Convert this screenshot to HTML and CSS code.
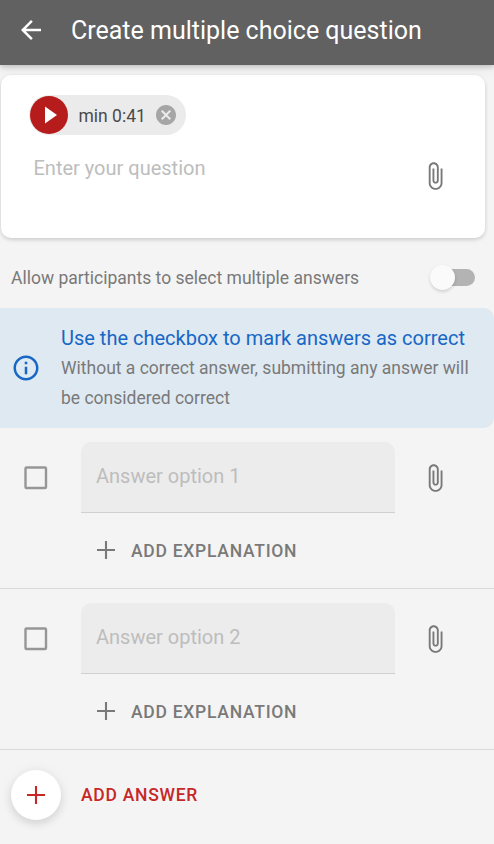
FILE: index.html
```html
<!DOCTYPE html>
<html lang="en">
<head>
<meta charset="utf-8">
<title>Create multiple choice question</title>
<link rel="stylesheet" href="styles.css">
</head>
<body>
<svg class="defs" aria-hidden="true">
  <symbol id="clip" viewBox="0 0 24 24"><path d="M16.5 6v11.5c0 2.21-1.79 4-4 4s-4-1.79-4-4V5c0-1.38 1.12-2.5 2.5-2.5s2.5 1.12 2.5 2.5v10.5c0 .55-.45 1-1 1s-1-.45-1-1V6H10v9.5c0 1.38 1.12 2.5 2.5 2.5s2.5-1.12 2.5-2.5V5c0-2.210-1.790-4-4-4S7 2.790 7 5v12.500c0 3.040 2.460 5.500 5.500 5.500s5.500-2.460 5.500-5.500V6h-1.500z"/></symbol>
  <symbol id="plus" viewBox="0 0 30 30"><path d="M6 15h18M15 6v18" fill="none" stroke="currentColor" stroke-width="2.100"/></symbol>
  <symbol id="box" viewBox="0 0 24 24"><rect x="1.500" y="1.500" width="20.500" height="20.500" rx="1" fill="none" stroke="currentColor" stroke-width="2.400"/></symbol>
</svg>
<header class="topbar">
  <svg class="icon" viewBox="0 0 24 24"><path d="M20 11H7.830l5.590-5.590L12 4l-8 8 8 8 1.410-1.410L7.830 13H20v-2z"/></svg>
  <h1 class="title">Create multiple choice question</h1>
</header>
<main>
  <section class="question-card">
    <div class="chip">
      <span class="play"><svg viewBox="0 0 38 38"><path d="M15 10.500v17L27 19z"/></svg></span>
      <span class="chip-label">min 0:41</span>
      <svg class="cancel" viewBox="0 0 24 24"><path d="M12 2C6.470 2 2 6.470 2 12s4.470 10 10 10 10-4.470 10-10S17.530 2 12 2zm5 13.590L15.590 17 12 13.410 8.410 17 7 15.590 10.590 12 7 8.410 8.410 7 12 10.590 15.590 7 17 8.410 13.410 12 17 15.590z"/></svg>
    </div>
    <div class="question-row">
      <span class="placeholder question">Enter your question</span>
      <svg class="icon clip"><use href="#clip"/></svg>
    </div>
  </section>
  <div class="setting">
    <span class="setting-label">Allow participants to select multiple answers</span>
    <span class="switch"><span class="thumb"></span></span>
  </div>
  <section class="info">
    <svg class="icon" viewBox="0 0 24 24"><path d="M11 7h2v2h-2zm0 4h2v6h-2zm1-9C6.480 2 2 6.480 2 12s4.480 10 10 10 10-4.480 10-10S17.520 2 12 2zm0 18c-4.410 0-8-3.590-8-8s3.590-8 8-8 8 3.590 8 8-3.590 8-8 8z"/></svg>
    <div>
      <p class="info-title">Use the checkbox to mark answers as correct</p>
      <p class="info-text">Without a correct answer, submitting any answer will<br>be considered correct</p>
    </div>
  </section>
  <section class="answer">
    <div class="answer-row">
      <svg class="checkbox"><use href="#box"/></svg>
      <div class="field"><span class="placeholder">Answer option 1</span></div>
      <svg class="icon clip"><use href="#clip"/></svg>
    </div>
    <div class="explain"><svg class="icon"><use href="#plus"/></svg><span class="explain-label">ADD EXPLANATION</span></div>
  </section>
  <section class="answer">
    <div class="answer-row">
      <svg class="checkbox"><use href="#box"/></svg>
      <div class="field"><span class="placeholder">Answer option 2</span></div>
      <svg class="icon clip"><use href="#clip"/></svg>
    </div>
    <div class="explain"><svg class="icon"><use href="#plus"/></svg><span class="explain-label">ADD EXPLANATION</span></div>
  </section>
  <div class="add">
    <span class="fab"><svg class="icon"><use href="#plus"/></svg></span>
    <span class="add-label">ADD ANSWER</span>
  </div>
</main>
</body>
</html>
```
FILE: styles.css
```css
* { box-sizing: border-box; }
body {
  margin: 0;
  height: 844px;
  overflow: hidden;
  background: #f4f4f4;
  color: #797979;
  font-family: Roboto, "Liberation Sans", sans-serif;
}
h1, p { margin: 0; font-weight: 400; }
.defs { display: none; }
.icon { display: block; flex: none; width: 30px; height: 30px; fill: currentColor; }
.topbar {
  position: relative;
  display: flex;
  align-items: center;
  gap: 25px;
  height: 65px;
  padding: 0 16px 5px;
  background: #616161;
  color: #fff;
  box-shadow: 0 2px 5px rgba(0,0,0,.18), 0 4px 12px rgba(0,0,0,.06);
}
.title { padding-top: 2px; font-size: 25px; line-height: 30px; white-space: nowrap; }
.question-card {
  width: 484px;
  height: 163px;
  margin: 10px 0 0 1px;
  padding: 20px 35px 0 28px;
  border-radius: 10px;
  background: #fff;
  box-shadow: 0 2px 4px rgba(0,0,0,.11), 0 1px 4px rgba(0,0,0,.07);
}
.chip {
  display: flex;
  align-items: center;
  width: 157px;
  height: 40px;
  padding-left: 1px;
  border-radius: 20px;
  background: #ebebeb;
}
.play { width: 38px; height: 38px; border-radius: 50%; background: #b71c1c; }
.play svg { display: block; fill: #fff; }
.chip-label { width: 75px; margin-left: 10.5px; padding-top: 2px; color: #4a4a4a; font-size: 17.5px; white-space: nowrap; }
.cancel { width: 24px; height: 24px; margin-left: .5px; fill: #a6a6a6; }
.question-row { display: flex; justify-content: space-between; padding-left: 4.500px; margin-top: 18px; }
.question-row .clip { margin-top: 8px; }
.placeholder { color: #bdbdbd; font-size: 20px; line-height: 30px; white-space: nowrap; }
.setting { display: flex; align-items: center; justify-content: space-between; height: 70px; padding: 9px 19px 0 11px; }
.setting-label { font-size: 17.5px; white-space: nowrap; }
.switch { display: flex; align-items: center; width: 45px; height: 17px; border-radius: 9px; background: linear-gradient(90deg, transparent 12px, #b3b3b3 12px); }
.thumb { flex: none; width: 25px; height: 25px; border-radius: 50%; background: #fafafa; box-shadow: 0 2px 3px rgba(0,0,0,.1), 0 1px 4px rgba(0,0,0,.06); }
.info {
  display: flex;
  align-items: center;
  gap: 20px;
  height: 120px;
  padding-left: 11px;
  border-radius: 0 10px 10px 0;
  background: #dfe9f2;
}
.info .icon, .info-title { color: #1767c5; }
.info-title { font-size: 20px; line-height: 30px; white-space: nowrap; }
.info-text { font-size: 17.5px; line-height: 30px; white-space: nowrap; }
.answer { height: 161px; padding-top: 14px; border-bottom: 1px solid #dadada; }
.answer-row { display: flex; align-items: center; }
.checkbox { width: 24px; height: 24px; margin: 0 33px 0 24px; color: #969696; }
.field { width: 314px; height: 71px; padding: 19px 15px; border-bottom: 1px solid #d0d0d0; border-radius: 10px 10px 0 0; background: #ececec; }
.answer-row .clip { margin-left: 25px; }
.explain { display: flex; align-items: center; gap: 10px; height: 75px; padding-left: 91px; }
.explain .icon { margin-top: -1px; }
.explain-label, .add-label { font-size: 17.5px; font-weight: 500; letter-spacing: .73px; white-space: nowrap; }
.add { display: flex; align-items: center; gap: 20px; padding: 20px 11px; color: #c62828; }
.fab { display: flex; align-items: center; justify-content: center; width: 50px; height: 50px; border-radius: 50%; background: #fff; box-shadow: 0 4px 8px rgba(0,0,0,.1), 0 1px 14px rgba(0,0,0,.06); }
```
